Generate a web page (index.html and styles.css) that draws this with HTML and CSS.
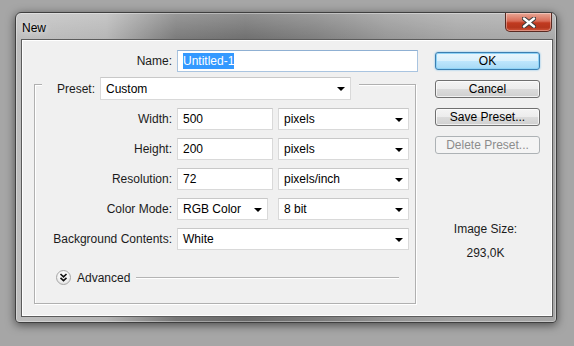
FILE: index.html
```html
<!DOCTYPE html>
<html lang="en">
<head>
<meta charset="UTF-8" />
<meta name="viewport" content="width=device-width, initial-scale=1" />
<title>New</title>
<link rel="stylesheet" href="styles.css">
</head>
<body>

<div class="window">
  <div class="titlebar">
    <span class="title">New</span>
    <div class="close">
      <svg width="14" height="11" viewBox="0 0 14 11">
        <path d="M2 1.5 L12 9.5 M12 1.5 L2 9.5" stroke="#3a3a3a" stroke-width="4.4" stroke-linecap="round" />
        <path d="M2 1.5 L12 9.5 M12 1.5 L2 9.5" stroke="#fff" stroke-width="2.4" stroke-linecap="round" />
      </svg>
    </div>
  </div>

  <div class="client">
    <div class="form">
      <div class="name-row">
        <span class="lbl">Name:</span>
        <div class="field name-field"><span class="sel">Untitled-1</span></div>
      </div>

      <div class="group">
        <div class="preset-row">
          <span class="lbl preset-lbl">Preset:</span>
          <div class="field select preset">Custom<i class="caret"></i></div>
        </div>

        <div class="rows">
          <span class="lbl">Width:</span>
          <div class="field">500</div>
          <div class="field select">pixels<i class="caret"></i></div>

          <span class="lbl">Height:</span>
          <div class="field">200</div>
          <div class="field select">pixels<i class="caret"></i></div>

          <span class="lbl">Resolution:</span>
          <div class="field">72</div>
          <div class="field select">pixels/inch<i class="caret"></i></div>

          <span class="lbl">Color Mode:</span>
          <div class="field select mode">RGB Color<i class="caret"></i></div>
          <div class="field select">8 bit<i class="caret"></i></div>

          <span class="lbl">Background Contents:</span>
          <div class="field select wide">White<i class="caret"></i></div>
        </div>

        <div class="advanced">
          <span class="adv-icon">
            <svg width="9" height="9" viewBox="0 0 9 9">
              <path d="M1.5 1 L4.5 3.8 L7.5 1 M1.5 4.8 L4.5 7.6 L7.5 4.8" fill="none" stroke="#111" stroke-width="1.6" />
            </svg>
          </span>
          <span class="adv-text">Advanced</span>
          <span class="adv-line"></span>
        </div>
      </div>
    </div>

    <div class="side">
      <div class="btn ok">OK</div>
      <div class="btn">Cancel</div>
      <div class="btn">Save Preset...</div>
      <div class="btn disabled">Delete Preset...</div>
      <div class="size">Image Size:</div>
      <div class="size-val">293,0K</div>
    </div>
  </div>
</div>

</body>
</html>
```

FILE: styles.css
```css
body {
  margin: 0;
  width: 574px;
  height: 346px;
  overflow: hidden;
  background: #a6a6a6;
  font-family: "Liberation Sans", Arial, sans-serif;
  font-size: 12px;
  color: #1b1b1b;
}

.window {
  margin: 12px 0 0 15px;
  width: 542px;
  height: 311px;
  box-sizing: border-box;
  border: 1px solid #3f3f3f;
  border-radius: 6px 6px 4px 4px;
  padding: 0 3px 5px 5px;
  background:
    linear-gradient(to bottom, rgba(255,255,255,.25), rgba(255,255,255,0) 30px),
    linear-gradient(to right, #bdbdbd 0, #b4b4b4 90px, #777 160px, #6b6b6b 230px, #7b7b7b 300px, #939393 370px, #a2a2a2 440px, #a7a7a7 542px);
  box-shadow: 0 2px 10px rgba(0,0,0,.55), inset 0 0 0 1px rgba(255,255,255,.35);
}

.titlebar {
  height: 26px;
  display: flex;
  align-items: flex-start;
  justify-content: space-between;
}

.title {
  margin: 8px 0 0 1px;
  font-family: "Liberation Sans", Arial, sans-serif;
  font-size: 12px;
  color: #000;
  text-shadow: 0 0 6px rgba(255,255,255,.9);
}

.close {
  width: 47px;
  height: 19px;
  box-sizing: border-box;
  margin-right: 1px;
  border: 1px solid #5a2a22;
  border-top: none;
  border-radius: 0 0 5px 5px;
  background: linear-gradient(to bottom, #e9a896 0, #d86b56 45%, #c13a20 55%, #b5361d 80%, #d0553a 100%);
  box-shadow: inset 0 0 0 1px rgba(255,255,255,.35);
  display: flex;
  align-items: center;
  justify-content: center;
}

.client {
  height: 278px;
  box-sizing: border-box;
  border: 1px solid #5c5c5c;
  background: #f0f0f0;
  box-shadow: inset 0 0 0 1px #fff;
  padding-top: 10px;
  display: flex;
}

.form {
  width: 413px;
}

.lbl {
  text-align: right;
  align-self: center;
  white-space: nowrap;
}

.field {
  height: 22px;
  box-sizing: border-box;
  border: 1px solid #d9d9d9;
  border-top-color: #c8c8c8;
  background: #fff;
  padding-left: 5px;
  display: flex;
  align-items: center;
  color: #000;
  position: relative;
}

.select {
  height: 23px;
}

.caret {
  position: absolute;
  right: 5px;
  top: 9px;
  border-left: 4px solid transparent;
  border-right: 4px solid transparent;
  border-top: 4px solid #000;
}

.name-row {
  display: grid;
  grid-template-columns: 150px 241px;
  column-gap: 5px;
}

.name-field {
  border-color: #a9c4e0;
  border-top-color: #8fb0d3;
}

.sel {
  background: #3399ff;
  color: #fff;
  padding: 1px 0;
}

.group {
  margin: 12px 0 0 12px;
  width: 382px;
  height: 220px;
  box-sizing: border-box;
  border: 1px solid #b0b0b0;
  box-shadow: inset 1px 1px 0 #fff, 1px 1px 0 #fff;
}

.preset-row {
  margin: -8px 0 0 7px;
  width: 317px;
  padding-left: 15px;
  box-sizing: border-box;
  background: #f0f0f0;
  display: flex;
  gap: 5px;
}

.preset-lbl {
  width: 38px;
  text-align: left;
}

.preset {
  width: 251px;
}

.rows {
  margin-top: 8px;
  display: grid;
  grid-template-columns: 137px 96px 131px;
  grid-auto-rows: 22px;
  column-gap: 5px;
  row-gap: 8px;
}

.rows .select {
  height: 22px;
}

.mode {
  width: 91px;
}

.wide {
  grid-column: span 2;
}

.advanced {
  margin: 20px 0 0 21px;
  display: flex;
  align-items: center;
}

.adv-icon {
  width: 15px;
  height: 15px;
  box-sizing: border-box;
  border: 1px solid #a7a7a7;
  border-radius: 50%;
  background: radial-gradient(circle at 50% 35%, #fff 0, #f4f4f4 50%, #d6d6d6 100%);
  display: flex;
  align-items: center;
  justify-content: center;
}

.adv-text {
  margin-left: 6px;
}

.adv-line {
  margin: 0 16px 0 6px;
  flex: 1;
  height: 0;
  border-top: 1px solid #b4b4b4;
  border-bottom: 1px solid #fff;
}

.side {
  width: 105px;
  padding-top: 2px;
  display: flex;
  flex-direction: column;
  gap: 10px;
}

.btn {
  height: 18px;
  box-sizing: border-box;
  border: 1px solid #707070;
  border-radius: 3px;
  background: linear-gradient(to bottom, #f4f4f4 0, #ececec 50%, #dcdcdc 51%, #cfcfcf 100%);
  box-shadow: inset 0 0 0 1px rgba(255,255,255,.7);
  text-align: center;
  line-height: 16px;
  color: #000;
}

.ok {
  border-color: #3c7fb1;
  background: linear-gradient(to bottom, #eaf6fd 0, #d9f0fc 50%, #bee6fd 51%, #a7d9f5 100%);
  box-shadow: inset 0 0 0 1px #8fd3f7, 0 0 2px #68b8ea;
}

.disabled {
  border-color: #adb2b5;
  background: #f4f4f4;
  box-shadow: none;
  color: #8c8c8c;
}

.size {
  margin-top: 58px;
  text-align: center;
  padding-right: 4px;
}

.size-val {
  margin-top: 0;
  text-align: center;
  padding-right: 4px;
}
```
